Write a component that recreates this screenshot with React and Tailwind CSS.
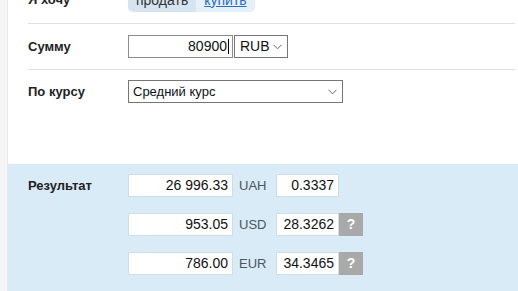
import React from 'react'

const font = "font-['Liberation_Sans',Arial,sans-serif]"

function Chevron({ className = '' }) {
  return (
    <svg width="9" height="6" viewBox="0 0 9 6" className={className}>
      <path d="M0.5 0.8 L4.5 4.8 L8.5 0.8" fill="none" stroke="#666" strokeWidth="1" />
    </svg>
  )
}

function ResultRow({ label, amount, currency, rate, help }) {
  return (
    <div className="flex items-center h-[23px]">
      <div className="w-[100px] text-[13px] font-bold text-[#222]">{label}</div>
      <div className="w-[105px] h-[23px] bg-white border border-[#d0dde8] flex items-center justify-end pr-[4px] text-[14px] text-[#111]">
        {amount}
      </div>
      <div className="w-[43px] pl-[6px] text-[13px] text-[#4d5560]">{currency}</div>
      <div className="w-[63px] h-[23px] bg-white border border-[#d0dde8] flex items-center justify-end pr-[4px] text-[14px] text-[#111]">
        {rate}
      </div>
      {help && (
        <div className="w-[24px] h-[23px] bg-[#a9a9a9] flex items-center justify-center text-white font-bold text-[14px]">
          ?
        </div>
      )}
    </div>
  )
}

export default function App() {
  return (
    <div className={`flex h-[291px] overflow-hidden bg-white ${font}`}>
      <div className="w-[8px] shrink-0 bg-[#f4f4f4] border-r border-[#e9e9e9]" />

      <div className="flex flex-1 flex-col">
        {/* form */}
        <div className="pl-[20px] pr-[3px] -mt-[12px] pb-[61px]">
          <div className="flex items-center pb-[11px] border-b border-[#e0e0e0]">
            <div className="w-[100px] text-[13px] font-bold text-[#222]">Я хочу</div>
            <div className="flex h-[24px] rounded-[5px] overflow-hidden text-[14px]">
              <span className="flex items-center px-[8px] bg-[#d6e4ef] text-[#333]">продать</span>
              <span className="flex items-center px-[8px] bg-[#e6f0f8] text-[#2a6ac4] underline">купить</span>
            </div>
          </div>

          <div className="flex items-center py-[11px] border-b border-[#e0e0e0]">
            <div className="w-[100px] text-[13px] font-bold text-[#222]">Сумму</div>
            <div className="w-[105px] h-[23px] border border-[#8c8c8c] flex items-center justify-end pr-[3px] text-[14px] text-[#111]">
              80900
              <span className="w-px h-[15px] bg-black ml-px" />
            </div>
            <div className="ml-[1px] w-[54px] h-[23px] border border-[#767676] flex items-center justify-between pl-[5px] pr-[5px] text-[14px] text-[#111]">
              RUB
              <Chevron />
            </div>
          </div>

          <div className="flex items-center pt-[10px]">
            <div className="w-[100px] text-[13px] font-bold text-[#222]">По курсу</div>
            <div className="w-[215px] h-[23px] border border-[#767676] flex items-center justify-between pl-[4px] pr-[5px] text-[13px] text-[#111]">
              Средний курс
              <Chevron />
            </div>
          </div>
        </div>

        {/* result */}
        <div className="flex-1 bg-[#d9ebf7] pl-[20px] pt-[10px] flex flex-col gap-[16px]">
          <ResultRow label="Результат" amount="26 996.33" currency="UAH" rate="0.3337" />
          <ResultRow amount="953.05" currency="USD" rate="28.3262" help />
          <ResultRow amount="786.00" currency="EUR" rate="34.3465" help />
        </div>
      </div>
    </div>
  )
}
